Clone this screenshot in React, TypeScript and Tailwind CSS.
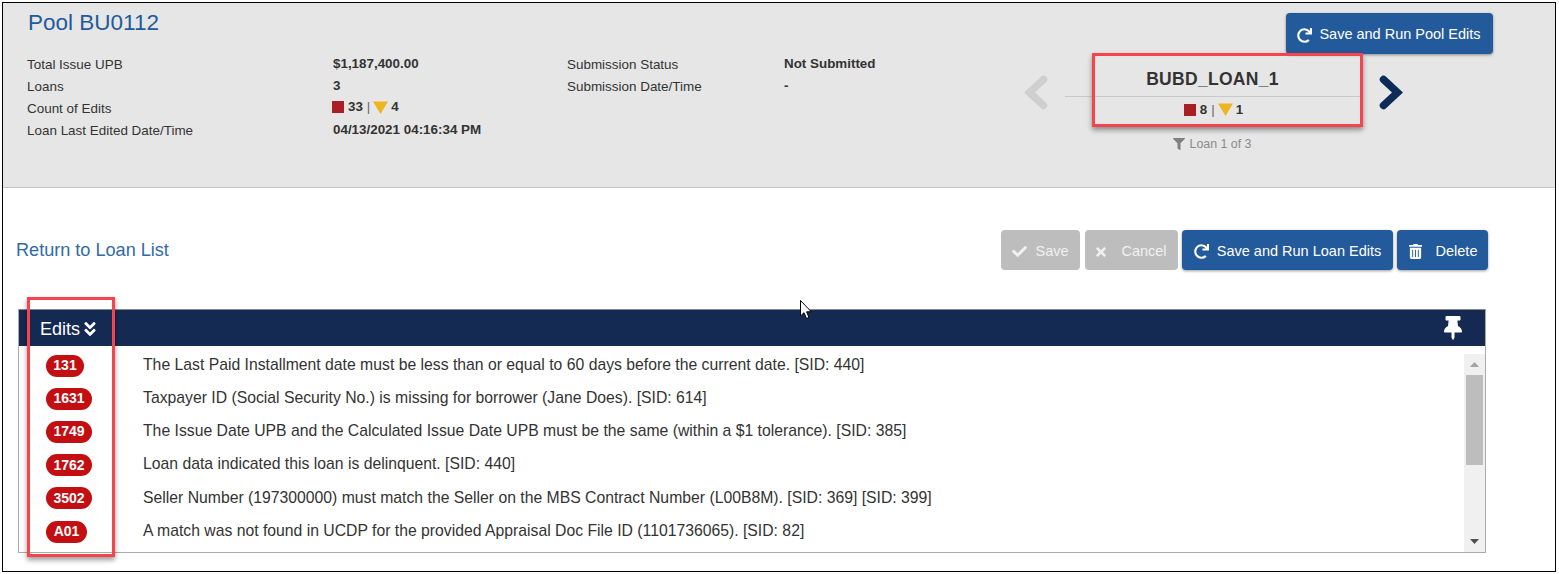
import React from "react";
import { FaRedo, FaCheck, FaTimes, FaTrashAlt, FaFilter, FaThumbtack, FaAngleDoubleDown } from "react-icons/fa";

function Counts({ red, yellow, className }: { red: number; yellow: number; className: string }) {
  return (
    <span className={`flex items-center font-bold text-[13.33px] text-[#333] -translate-y-[1px] ${className}`}>
      <span className="w-[12px] h-[12px] bg-[#a91f24] mr-[4px]" />
      <span>{red}</span>
      <span className="font-normal text-[#666] ml-[4px] mr-[3px]">|</span>
      <svg width="15" height="13" viewBox="0 0 15 13" className="mr-[3px]"><path d="M0 0.5H15L7.5 13Z" fill="#eeb51f" /></svg>
      <span>{yellow}</span>
    </span>
  );
}

function Btn({ icon, label, gap, disabled, className }: { icon: React.ReactNode; label: string; gap: string; disabled?: boolean; className: string }) {
  return (
    <button className={`rounded-[4px] flex items-center justify-center pt-[3px] text-[14.5px] ${gap} ${disabled ? "bg-[#bdbdbd] text-[#f1f1f1]" : "bg-[#235a9b] text-white shadow-[0_1px_3px_rgba(0,0,0,0.4)]"} ${className}`}>
      {icon}
      <span>{label}</span>
    </button>
  );
}

function Chevron({ dir, color, className }: { dir: "left" | "right"; color: string; className: string }) {
  return (
    <svg width="24" height="35" viewBox="0 0 24 35" className={className}>
      <polyline points={dir === "left" ? "19.5,4.5 5.5,17.5 19.5,30.5" : "4.5,4.5 18.5,17.5 4.5,30.5"} fill="none" stroke={color} strokeWidth="7.5" strokeLinecap="round" strokeLinejoin="miter" />
    </svg>
  );
}

const rows = [
  ["131", "w-[38px]", "The Last Paid Installment date must be less than or equal to 60 days before the current date. [SID: 440]"],
  ["1631", "w-[46px]", "Taxpayer ID (Social Security No.) is missing for borrower (Jane Does). [SID: 614]"],
  ["1749", "w-[46px]", "The Issue Date UPB and the Calculated Issue Date UPB must be the same (within a $1 tolerance). [SID: 385]"],
  ["1762", "w-[46px]", "Loan data indicated this loan is delinquent. [SID: 440]"],
  ["3502", "w-[46px]", "Seller Number (197300000) must match the Seller on the MBS Contract Number (L00B8M). [SID: 369] [SID: 399]"],
  ["A01", "w-[41px]", "A match was not found in UCDP for the provided Appraisal Doc File ID (1101736065). [SID: 82]"],
];

const info = [
  ["Total Issue UPB", "$1,187,400.00"],
  ["Loans", "3"],
  ["Count of Edits", null],
  ["Loan Last Edited Date/Time", "04/13/2021 04:16:34 PM"],
];

export default function App() {
  return (
    <div className="w-[1559px] h-[574px] bg-white pl-[2px] pt-[2px] font-['Liberation_Sans',Arial,sans-serif] text-[#333] overflow-hidden">
      <div className="relative w-[1554px] h-[570px] border border-black bg-white">
        <header className="h-[185px] bg-[#e6e6e6] border-b border-[#c4c4c4] flex">
          <div className="w-[1020px] shrink-0 pl-[24px]">
            <h1 className="pl-[1px] pt-[6px] text-[22.5px] leading-[28px] text-[#235a9b]">Pool BU0112</h1>
            <div className="flex mt-[17px] text-[13.45px] leading-[22px]">
              <div className="w-[306px]">
                {info.map(([l]) => <div key={l as string}>{l}</div>)}
              </div>
              <div className="w-[234px] font-bold text-[13.4px]">
                {info.map(([l, v]) => (
                  <div key={l as string} className="h-[22px] -translate-y-[1px]">
                    {v ?? <div className="h-[22px] flex items-center"><Counts red={33} yellow={4} className="-ml-[1px]" /></div>}
                  </div>
                ))}
              </div>
              <div className="w-[217px]">
                <div>Submission Status</div>
                <div>Submission Date/Time</div>
              </div>
              <div className="font-bold text-[13.4px] -translate-y-[1px]">
                <div>Not Submitted</div>
                <div>-</div>
              </div>
            </div>
          </div>
          <div className="flex-1 flex flex-col">
            <div className="flex justify-end pt-[10px] pr-[62px]">
              <Btn icon={<FaRedo className="text-[15px]" />} label="Save and Run Pool Edits" gap="gap-[7px]" className="w-[207px] h-[41px] pr-[1px]" />
            </div>
            <div className="flex items-start mt-[1px]">
              <Chevron dir="left" color="#cfcfcf" className="ml-[1px] mt-[20px]" />
              <div className="ml-[17px] w-[295px] flex flex-col items-center">
                <div className="w-full h-[42px] flex flex-col items-center border-b border-[#c9c9c9]">
                  <div className="pt-[14px] font-bold text-[17.5px] leading-[20px] tracking-[0.3px] text-[#333]">BUBD_LOAN_1</div>
                </div>
                <div className="h-[28px] flex items-center"><Counts red={8} yellow={1} className="ml-[2px]" /></div>
                <div className="flex items-center gap-[4px] text-[12.4px] text-[#8a8a8a] mt-[10px]">
                  <FaFilter className="text-[12px] text-[#808080]" /><span>Loan 1 of 3</span>
                </div>
              </div>
              <Chevron dir="right" color="#0e2a57" className="ml-[19px] mt-[20px]" />
            </div>
          </div>
        </header>

        <div className="flex items-center justify-between h-[40px] mt-[42px] pl-[13px] pr-[67px]">
          <a className="text-[18.1px] text-[#2f6ba8] pt-[2px]">Return to Loan List</a>
          <div className="flex gap-[4px]">
            <Btn disabled icon={<FaCheck className="text-[15px]" />} label="Save" gap="gap-[8px]" className="w-[79px] h-[40px] mr-[1px]" />
            <Btn disabled icon={<FaTimes className="text-[14px]" />} label="Cancel" gap="gap-[13px]" className="w-[93px] h-[40px] pr-[2px]" />
            <Btn icon={<FaRedo className="text-[15px]" />} label="Save and Run Loan Edits" gap="gap-[8px]" className="w-[211px] h-[40px]" />
            <Btn icon={<FaTrashAlt className="text-[15px]" />} label="Delete" gap="gap-[13px]" className="w-[91px] h-[40px]" />
          </div>
        </div>

        <section className="ml-[15px] mt-[39px] w-[1468px] h-[244px] border border-[#aaa] border-t-[#888]">
          <div className="h-[36px] bg-[#152a53] flex items-center justify-between pl-[21px] pr-[20px] text-white">
            <div className="flex items-center gap-[1px] text-[18px] pt-[2px]"><span>Edits</span><FaAngleDoubleDown className="text-[18px]" /></div>
            <FaThumbtack className="text-[24px]" />
          </div>
          <div className="flex h-[206px]">
            <div className="flex-1 pt-[3px]">
              {rows.map(([code, w, text]) => (
                <div key={code} className="flex items-center h-[33.2px]">
                  <div className="w-[124px] shrink-0 pl-[27px]">
                    <span className={`${w} h-[22px] rounded-full bg-[#c30f11] text-white font-bold text-[14px] flex items-center justify-center`}>{code}</span>
                  </div>
                  <div className="text-[15.75px] whitespace-nowrap text-[#333] -translate-y-[1px]">{text}</div>
                </div>
              ))}
            </div>
            <div className="w-[21px] mt-[8px] bg-[#f0f0f0] flex flex-col items-center">
              <div className="h-[21px] flex items-center justify-center"><svg width="9" height="5" viewBox="0 0 9 5"><path d="M4.5 0L9 5H0Z" fill="#a3a3a3" /></svg></div>
              <div className="w-[17px] h-[90px] bg-[#bdbdbd]" />
              <div className="flex-1" />
              <div className="h-[21px] flex items-center justify-center"><svg width="9" height="5" viewBox="0 0 9 5"><path d="M0 0H9L4.5 5Z" fill="#505050" /></svg></div>
            </div>
          </div>
        </section>

        <div className="absolute left-[1089px] top-[50px] w-[271px] h-[74px] border-[3px] border-[#f5444c] shadow-[0_3px_5px_rgba(0,0,0,0.4)]" />
        <div className="absolute left-[24px] top-[294px] w-[88px] h-[260px] border-[3px] border-[#f5444c] shadow-[0_3px_5px_rgba(0,0,0,0.4)]" />
        <svg className="absolute left-[797px] top-[297px]" width="12" height="19" viewBox="0 0 12 19"><path d="M0.5 0.5V16L4 12.7L6.5 18.5L9 17.4L6.6 11.8H11.3Z" fill="#fff" stroke="#000" strokeWidth="1" /></svg>
      </div>
    </div>
  );
}
